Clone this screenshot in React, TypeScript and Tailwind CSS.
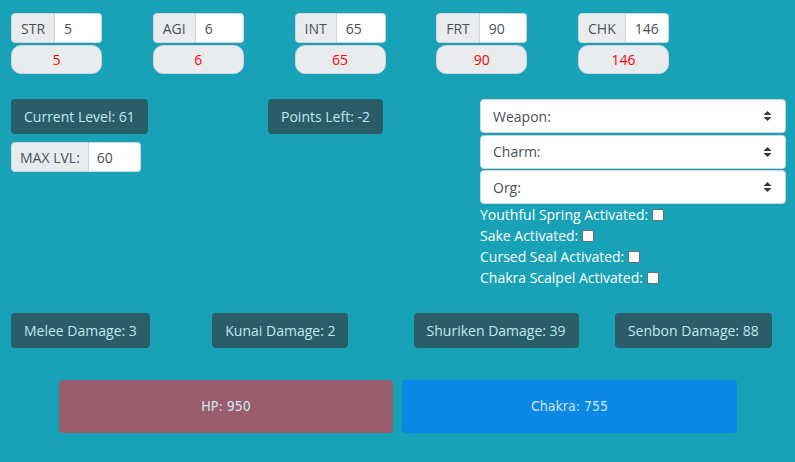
import React from "react";

const stats = [
  { label: "STR", value: "5" },
  { label: "AGI", value: "6" },
  { label: "INT", value: "65" },
  { label: "FRT", value: "90" },
  { label: "CHK", value: "146" },
];

const damages = [
  "Melee Damage: 3",
  "Kunai Damage: 2",
  "Shuriken Damage: 39",
  "Senbon Damage: 88",
];

const selects = ["Weapon:", "Charm:", "Org:"];

const checks = [
  "Youthful Spring Activated:",
  "Sake Activated:",
  "Cursed Seal Activated:",
  "Chakra Scalpel Activated:",
];

function Arrows() {
  return (
    <svg width="9" height="12" viewBox="0 0 9 12" className="shrink-0">
      <path d="M0.5 5 L4.5 1 L8.5 5 Z" fill="#343a40" />
      <path d="M0.5 7 L8.5 7 L4.5 11 Z" fill="#343a40" />
    </svg>
  );
}

function DarkBox({ children }: { children: React.ReactNode }) {
  return (
    <div className="inline-flex h-[35px] items-center rounded-[4px] bg-[#2a5d68] px-[13px] text-[14px] text-[#c3e6f0] whitespace-nowrap">
      {children}
    </div>
  );
}

export default function App() {
  return (
    <div
      className="min-h-[462px] w-full bg-[#17a2b8] pt-[13px] text-[14px] leading-[21px]"
      style={{ fontFamily: '"Open Sans", "Noto Sans", sans-serif' }}
    >
      {/* stats row */}
      <div className="flex pl-[11px]">
        {stats.map((s) => (
          <div key={s.label} className="w-[141.75px] shrink-0">
            <div className="flex w-[91px] flex-col gap-[2px]">
              <div className="flex h-[30px]">
                <div className="flex items-center rounded-l-[4px] border border-[#ced4da] bg-[#e9ecef] px-[9px] text-[#495057]">
                  {s.label}
                </div>
                <div className="flex flex-1 items-center rounded-r-[4px] border border-l-0 border-[#ced4da] bg-white pl-[9px] text-[#495057]">
                  {s.value}
                </div>
              </div>
              <div className="flex h-[29px] items-center justify-center rounded-[10px] border border-[#ced4da] bg-[#e9ecef] text-[#ff0000]">
                {s.value}
              </div>
            </div>
          </div>
        ))}
      </div>

      {/* middle row */}
      <div className="mt-[25px] flex">
        <div className="w-[268px] shrink-0 pl-[11px]">
          <DarkBox>Current Level: 61</DarkBox>
          <div className="mt-[8px] flex h-[30px] w-[130px]">
            <div className="flex items-center rounded-l-[4px] border border-[#ced4da] bg-[#e9ecef] px-[8px] text-[#495057]">
              MAX LVL:
            </div>
            <div className="flex flex-1 items-center rounded-r-[4px] border border-l-0 border-[#ced4da] bg-white pl-[8px] text-[#495057]">
              60
            </div>
          </div>
        </div>
        <div className="w-[212px] shrink-0">
          <DarkBox>Points Left: -2</DarkBox>
        </div>
        <div className="w-[306px] shrink-0">
          <div className="flex flex-col gap-[1.5px]">
            {selects.map((s) => (
              <div
                key={s}
                className="flex h-[34px] items-center justify-between rounded-[4px] border border-[#ced4da] bg-white pl-[12px] pr-[13px] text-[#495057]"
              >
                <span>{s}</span>
                <Arrows />
              </div>
            ))}
          </div>
          <div className="mt-[0px] flex flex-col text-white">
            {checks.map((c) => (
              <div key={c} className="flex h-[21px] items-center">
                <span>{c}</span>
                <span className="ml-[4px] inline-block h-[12px] w-[12px] rounded-[2px] border border-[#6b6b6b] bg-white" />
              </div>
            ))}
          </div>
        </div>
      </div>

      {/* damage row */}
      <div className="mt-[25px] flex pl-[11px]">
        {damages.map((d) => (
          <div key={d} className="w-[201.3px] shrink-0">
            <DarkBox>{d}</DarkBox>
          </div>
        ))}
      </div>

      {/* bars */}
      <div
        className="mt-[32px] flex gap-[9px] pl-[59px] text-[14px] text-[#cfe7f5]"
        style={{ fontFamily: '"DejaVu Sans Condensed", "DejaVu Sans", sans-serif', fontStretch: "condensed" }}
      >
        <div className="flex h-[53px] w-[334px] items-center justify-center rounded-[4px] bg-[#995d6d]">
          HP: 950
        </div>
        <div className="flex h-[53px] w-[335px] items-center justify-center rounded-[4px] bg-[#0a88e5]">
          Chakra: 755
        </div>
      </div>
    </div>
  );
}
